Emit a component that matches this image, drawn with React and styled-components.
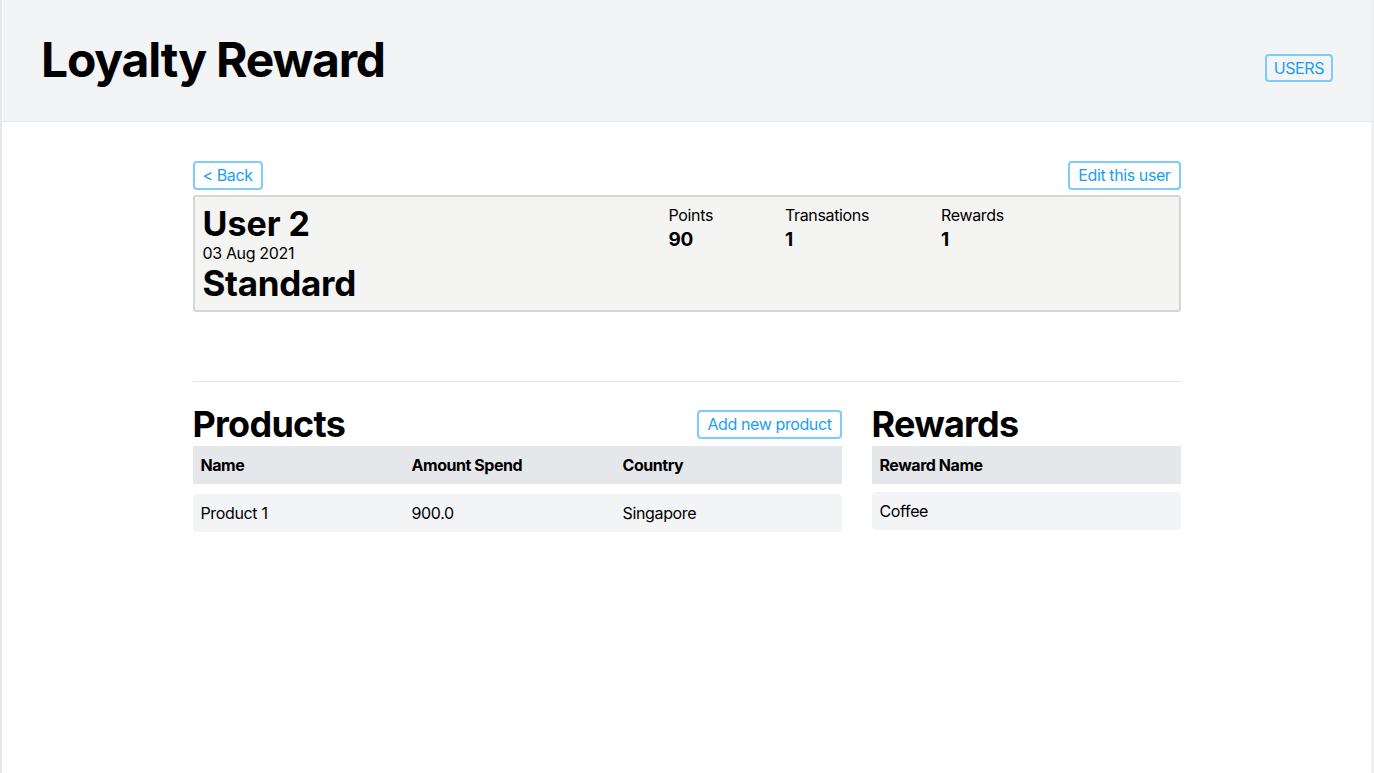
import React from "react";
import styled, { createGlobalStyle } from "styled-components";

const Global = createGlobalStyle`
  html, body { margin: 0; padding: 0; background: #fff; }
  body { font-family: Inter, "Noto Sans", sans-serif; color: #000; letter-spacing: -0.35px; }
  * { box-sizing: border-box; }
`;

const Page = styled.div`
  min-height: 100vh;
  border-left: 2px solid #e5e7eb;
  border-right: 3px solid #eeeff1;
  background: #fff;
`;

const Header = styled.header`
  height: 122px;
  background: #f3f4f6;
  border-bottom: 1px solid #e5e7eb;
  border-left: 1px solid #fafafa;
  display: flex;
  justify-content: space-between;
  align-items: flex-start;
  padding: 36px 38px 0 38px;
`;

const Title = styled.h1`
  margin: 0;
  font-size: 48px;
  line-height: 48px;
  font-weight: 700;
  letter-spacing: -1.2px;
`;

const OutlineButton = styled.button`
  font-family: Inter, "Noto Sans", sans-serif;
  font-size: 16px;
  letter-spacing: -0.4px;
  line-height: 21px;
  color: #1a9ff0;
  background: #fff;
  border: 2px solid #7fcbfb;
  border-radius: 4px;
  padding: 2px 8px;
  cursor: pointer;
  margin-top: ${(p) => p.$mt || "0"};
  white-space: nowrap;
`;

const NavButton = styled(OutlineButton)`
  background: transparent;
  padding: 2px 7px;
  line-height: 20px;
`;

const Container = styled.main`
  max-width: 988px;
  margin: 0 auto;
  padding-top: 39px;
`;

const TopBar = styled.div`
  display: flex;
  justify-content: space-between;
  margin-bottom: 5px;
`;

const UserCard = styled.section`
  background: #f4f4f2;
  border: 2px solid #d6d6d6;
  border-radius: 3px;
  height: 117px;
  display: flex;
  padding: 0 8px;
`;

const UserInfo = styled.div`
  width: 466px;
  display: flex;
  flex-direction: column;
  padding-top: 8px;
`;

const UserName = styled.div`
  font-size: ${(p) => p.$size || "34px"};
  font-weight: 700;
  line-height: ${(p) => p.$lh || "38px"};
  letter-spacing: ${(p) => p.$ls || "0"};
`;

const UserDate = styled.div`
  font-size: 16px;
  line-height: 20px;
`;

const Stats = styled.div`
  display: flex;
  gap: 72px;
  padding-top: 8px;
`;

const Stat = styled.div`
  display: flex;
  flex-direction: column;
`;

const StatLabel = styled.div`
  font-size: 16px;
  line-height: 20px;
`;

const StatValue = styled.div`
  font-size: 19px;
  font-weight: 700;
  line-height: 22px;
  margin-top: 4px;
`;

const Divider = styled.hr`
  border: none;
  border-top: 1px solid #e5e7eb;
  margin: 69px 0 20px;
`;

const Sections = styled.div`
  display: grid;
  grid-template-columns: 649px 309px;
  column-gap: 30px;
`;

const SectionHead = styled.div`
  display: flex;
  justify-content: space-between;
  align-items: center;
  height: 44px;
`;

const SectionTitle = styled.h2`
  margin: 0;
  font-size: 36px;
  line-height: 44px;
  font-weight: 700;
  letter-spacing: -0.75px;
`;

const Table = styled.div`
  display: flex;
  flex-direction: column;
`;

const Row = styled.div`
  display: grid;
  grid-template-columns: ${(p) => p.$cols};
  align-items: center;
  height: 38px;
  padding: 0 8px;
  font-size: 16px;
  background: ${(p) => (p.$head ? "#e5e7eb" : "#f3f4f6")};
  font-weight: ${(p) => (p.$head ? 700 : 400)};
  letter-spacing: ${(p) => (p.$head ? "-0.45px" : "-0.35px")};
  border-radius: ${(p) => (p.$head ? "0" : "4px")};
  margin-top: ${(p) => p.$mt || "0"};
`;

const Cell = styled.div`
  white-space: nowrap;
`;

export default function App() {
  const productCols = "211px 211px 1fr";
  return (
    <>
      <Global />
      <Page>
        <Header>
          <Title>Loyalty Reward</Title>
          <NavButton $mt="18px">USERS</NavButton>
        </Header>
        <Container>
          <TopBar>
            <OutlineButton>&lt; Back</OutlineButton>
            <OutlineButton>Edit this user</OutlineButton>
          </TopBar>
          <UserCard>
            <UserInfo>
              <UserName>User 2</UserName>
              <UserDate>03 Aug 2021</UserDate>
              <UserName $size="35px" $lh="40px" $ls="-0.3px">Standard</UserName>
            </UserInfo>
            <Stats>
              <Stat>
                <StatLabel>Points</StatLabel>
                <StatValue>90</StatValue>
              </Stat>
              <Stat>
                <StatLabel>Transations</StatLabel>
                <StatValue>1</StatValue>
              </Stat>
              <Stat>
                <StatLabel>Rewards</StatLabel>
                <StatValue>1</StatValue>
              </Stat>
            </Stats>
          </UserCard>
          <Divider />
          <Sections>
            <div>
              <SectionHead>
                <SectionTitle>Products</SectionTitle>
                <OutlineButton>Add new product</OutlineButton>
              </SectionHead>
              <Table>
                <Row $head $cols={productCols}>
                  <Cell>Name</Cell>
                  <Cell>Amount Spend</Cell>
                  <Cell>Country</Cell>
                </Row>
                <Row $cols={productCols} $mt="10px">
                  <Cell>Product 1</Cell>
                  <Cell>900.0</Cell>
                  <Cell>Singapore</Cell>
                </Row>
              </Table>
            </div>
            <div>
              <SectionHead>
                <SectionTitle>Rewards</SectionTitle>
              </SectionHead>
              <Table>
                <Row $head $cols="1fr">
                  <Cell>Reward Name</Cell>
                </Row>
                <Row $cols="1fr" $mt="8px">
                  <Cell>Coffee</Cell>
                </Row>
              </Table>
            </div>
          </Sections>
        </Container>
      </Page>
    </>
  );
}
